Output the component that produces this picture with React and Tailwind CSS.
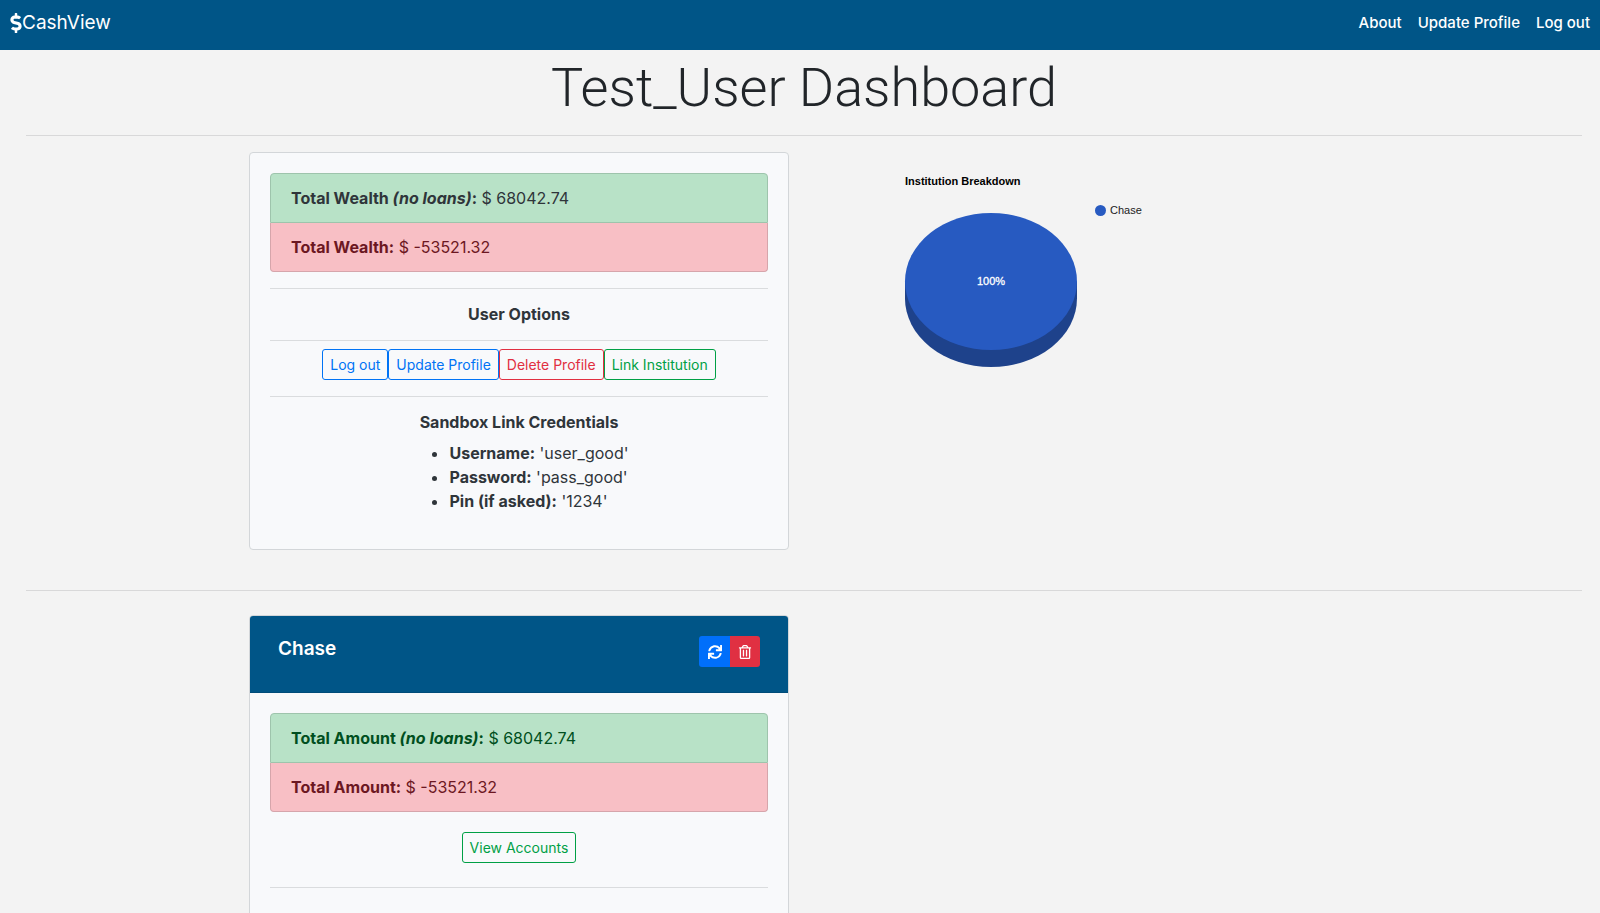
import React from "react";
import { FaDollarSign, FaSync, FaRegTrashAlt } from "react-icons/fa";

function Totals({ label, good, bad, goodText }) {
  return (
    <ul className="rounded">
      <li className={"rounded-t border border-[#9ec4ac] bg-[#b8e2c7] px-5 py-3 " + goodText}>
        <strong className="font-bold">
          {label} <em>(no loans)</em>:
        </strong>{" "}
        $ {good}
      </li>
      <li className="rounded-b border border-t-0 border-[#d6a5ab] bg-[#f8bfc5] px-5 py-3 text-[#6c1722]">
        <strong className="font-bold">{label}:</strong> $ {bad}
      </li>
    </ul>
  );
}

const outline = "h-[31px] rounded-[3px] border px-[7px] text-sm leading-5 ";

function InstitutionChart() {
  return (
    <svg viewBox="0 0 450 240" className="h-[240px] w-[450px] max-w-full" fontFamily="'Liberation Sans', Arial, sans-serif" fontSize="11">
      <text x="86" y="33" fontWeight="bold" fill="#000">Institution Breakdown</text>
      <path d="M86 129.5V146.500A86 68.500 0 0 0 258 146.500V129.500Z" fill="#1e428b" />
      <ellipse cx="172" cy="129.500" rx="86" ry="68.500" fill="#275ac1" />
      <text x="172" y="133" textAnchor="middle" fill="#fff" stroke="#fff" strokeWidth="0.300">100%</text>
      <circle cx="281.500" cy="58.500" r="5.500" fill="#275ac1" />
      <text x="291" y="62" fill="#222">Chase</text>
    </svg>
  );
}

export default function App() {
  return (
    <div className="h-screen overflow-hidden bg-[#f3f3f3] font-['Inter','Liberation_Sans',sans-serif] text-base leading-6 text-[#212529]">
      <header className="flex h-[50px] items-start justify-between bg-[#005587] px-[10px] pt-[10px] text-white">
        <a href="#home" className="flex items-center text-[19px] leading-[25px]">
          <FaDollarSign className="h-5 w-3" />
          CashView
        </a>
        <nav className="flex gap-4 text-[15px] leading-[25px] font-medium">
          <a href="#about">About</a>
          <a href="#profile">Update Profile</a>
          <a href="#logout">Log out</a>
        </nav>
      </header>

      <main className="pr-[18px] pl-[26px]">
        <h1 className="pt-1 text-center font-['Roboto','Inter',sans-serif] text-[54px] leading-[67px] font-[350]">Test_User Dashboard</h1>
        <hr className="mt-[14px] border-[#d8d8d9]" />

        <section className="mx-auto mt-4 grid max-w-[1110px] grid-cols-2 gap-[30px]">
          <div className="rounded border border-[#d3d6d9] bg-[#f8f9fb] p-5 pb-[35px] text-[#2f353a]">
            <Totals label="Total Wealth" good="68042.74" bad="-53521.32" goodText="text-[#2f353a]" />
            <hr className="mt-4 border-[#dadcde]" />
            <h2 className="pt-[13px] pb-[14px] text-center font-bold">User Options</h2>
            <hr className="border-[#dadcde]" />
            <div className="mt-2 flex justify-center">
              <button type="button" className={outline + "border-[#0073f5] text-[#0073f5]"}>Log out</button>
              <button type="button" className={outline + "border-[#0073f5] text-[#0073f5]"}>Update Profile</button>
              <button type="button" className={outline + "border-[#e12f41] text-[#e12f41]"}>Delete Profile</button>
              <button type="button" className={outline + "border-[#00a045] text-[#00a045]"}>Link Institution</button>
            </div>
            <hr className="mt-4 border-[#dadcde]" />
            <h2 className="mt-[13px] text-center font-bold">Sandbox Link Credentials</h2>
            <div className="mt-[7px] mb-px flex justify-center">
              <ul className="list-disc pl-10">
                <li><strong>Username:</strong> 'user_good'</li>
                <li><strong>Password:</strong> 'pass_good'</li>
                <li><strong>Pin (if asked):</strong> '1234'</li>
              </ul>
            </div>
          </div>
          <InstitutionChart />
        </section>

        <hr className="mt-10 border-[#d8d8d9]" />

        <section className="mx-auto mt-6 grid max-w-[1110px] grid-cols-2 gap-[30px]">
          <div className="rounded border border-[#d3d6d9] bg-[#f8f9fb]">
            <div className="flex h-[77px] items-start justify-between rounded-t-[3px] border-b border-[#004c79] bg-[#005587] px-7 pt-5 text-white">
              <h2 className="text-[19px] leading-[25px] font-semibold">Chase</h2>
              <div className="flex">
                <button type="button" aria-label="Refresh" className="flex h-[31px] w-[31px] items-center justify-center rounded-l-[3px] bg-[#006ffb]">
                  <FaSync className="size-[14px]" />
                </button>
                <button type="button" aria-label="Delete" className="flex h-[31px] w-[30px] items-center justify-center rounded-r-[3px] bg-[#e03042]">
                  <FaRegTrashAlt className="size-[14px]" />
                </button>
              </div>
            </div>
            <div className="p-5">
              <Totals label="Total Amount" good="68042.74" bad="-53521.32" goodText="text-[#004f20]" />
              <div className="mt-5 flex justify-center">
                <button type="button" className={outline + "border-[#00a045] text-[#00a045]"}>View Accounts</button>
              </div>
              <hr className="mt-6 mb-10 border-[#dadcde]" />
            </div>
          </div>
        </section>
      </main>
    </div>
  );
}
